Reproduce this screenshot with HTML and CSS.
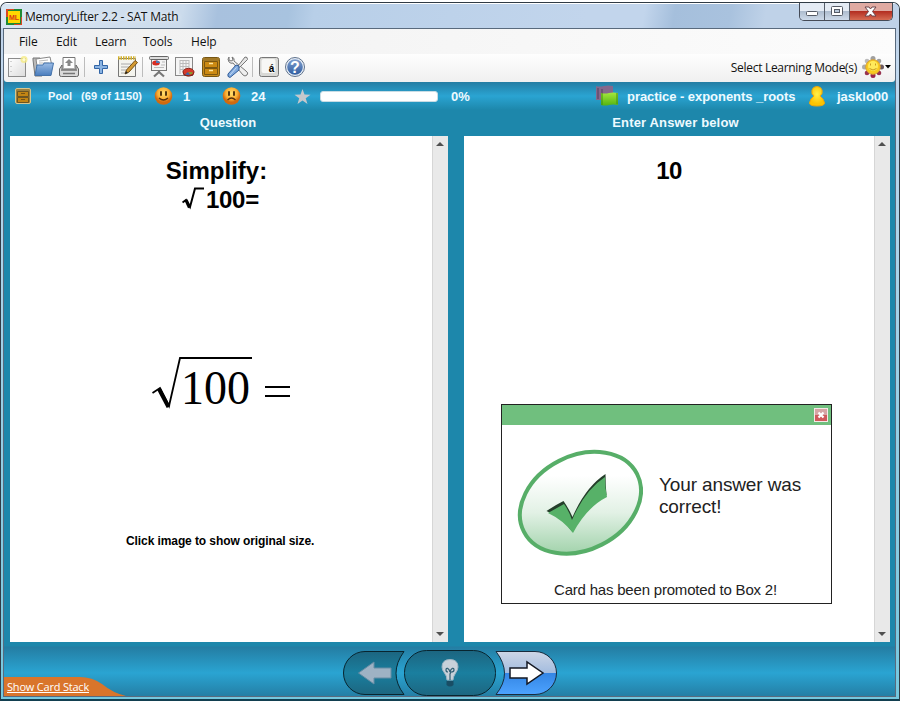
FILE: index.html
```html
<!DOCTYPE html>
<html lang="en">
<head>
<meta charset="utf-8">
<title>MemoryLifter 2.2 - SAT Math</title>
<link rel="stylesheet" href="styles.css">
</head>
<body>
<svg class="defs" width="0" height="0" aria-hidden="true">
  <defs>
    <linearGradient id="paper" x2="1" y2="1"><stop stop-color="#fff"/><stop offset="1" stop-color="#dcdcdc"/></linearGradient>
    <linearGradient id="blue" x2="0" y2="1"><stop stop-color="#9cbde6"/><stop offset="1" stop-color="#4a7dbd"/></linearGradient>
    <linearGradient id="help" x2="0" y2="1"><stop stop-color="#7f9fce"/><stop offset="1" stop-color="#2f5ca0"/></linearGradient>
    <radialGradient id="face" cy=".35"><stop stop-color="#ffe070"/><stop offset=".65" stop-color="#fbb034"/><stop offset="1" stop-color="#d06a10"/></radialGradient>
    <radialGradient id="person" cy=".4"><stop stop-color="#fff04a"/><stop offset="1" stop-color="#fcc400"/></radialGradient>
    <linearGradient id="badge" gradientUnits="userSpaceOnUse" x1="63" y1="0" x2="63" y2="106" gradientTransform="rotate(27 63 54)"><stop offset=".25" stop-color="#fff"/><stop offset=".6" stop-color="#e2f1e5"/><stop offset="1" stop-color="#a0d2aa"/></linearGradient>
    <linearGradient id="dark" x2="0" y2="1"><stop stop-color="#1c6580"/><stop offset=".5" stop-color="#1a7f9f"/><stop offset="1" stop-color="#1d6680"/></linearGradient>
    <linearGradient id="next" x2="0" y2="1"><stop stop-color="#cdd6e6"/><stop offset=".5" stop-color="#a3bcdf"/><stop offset=".51" stop-color="#3486e4"/><stop offset="1" stop-color="#4da3ff"/></linearGradient>
    <linearGradient id="green" x2="0" y2="1"><stop stop-color="#a5e83c"/><stop offset="1" stop-color="#54b412"/></linearGradient>
  </defs>
</svg>
<main class="window">
  <header class="titlebar">
    <svg class="logo" width="16" height="16" viewBox="0 0 16 16"><rect width="16" height="16" fill="#1f8a35"/><path d="M0 0H8V1H2V8H0ZM15 8h1v8H8v-1h7Z" fill="#d94722"/><rect x="2" y="2" width="12" height="12" fill="#ffd800"/><text x="8" y="10.500" class="logo-text">ML</text></svg>
    <span class="caption">MemoryLifter 2.2 - SAT Math</span>
    <div class="controls">
      <span class="ctl"><svg width="25" height="17" viewBox="0 0 25 17"><rect x="6.500" y="8.500" width="11" height="4" rx="1" fill="#fff" stroke="#555b66"/></svg></span>
      <span class="ctl"><svg width="25" height="17" viewBox="0 0 25 17"><rect x="6.500" y="3.500" width="11" height="9" rx="1" fill="#fff" stroke="#555b66"/><rect x="9.500" y="6.500" width="5" height="3" fill="#b9c8da" stroke="#555b66"/></svg></span>
      <span class="ctl close"><svg width="42" height="17" viewBox="0 0 42 17"><path d="M15 4h4l1.500 2L22 4h4l-3.500 4.500L26 13h-4l-1.500-2-1.500 2h-4l3.500-4.500Z" fill="#fff" stroke="#6b454b"/></svg></span>
    </div>
  </header>
  <div class="client">
    <nav class="menu"><span>File</span><span>Edit</span><span>Learn</span><span>Tools</span><span>Help</span></nav>
    <div class="toolbar">
      <svg class="tool" viewBox="0 0 26 24"><rect x="4.500" y="3.500" width="17" height="18" fill="url(#paper)" stroke="#8c8c8c"/><path d="M7 6v14" stroke="#aaa" stroke-dasharray="1 4"/><circle cx="20" cy="4.500" r="3.500" fill="#f5eb83" opacity=".8"/><circle cx="20" cy="4.500" r="1.500" fill="#fffbd0"/></svg>
      <svg class="tool" viewBox="0 0 26 24"><path d="M3 5V3h7l2 3v15H5Z" fill="#bbb" stroke="#777"/><path d="M6 4l14-2 2 9H7Z" fill="#fff" stroke="#888"/><path d="M9 6l9-1M9 8h10" stroke="#bbb"/><path d="M7 10h6l1-2h9.500L21 20.500H5Z" fill="url(#blue)" stroke="#4472aa"/></svg>
      <svg class="tool" viewBox="0 0 26 24"><path d="M7 13V2.500h12V13" fill="#fff" stroke="#777"/><path d="M13 4l4 4h-2.500v3h-3V8H9Z" fill="#888"/><path d="M6 10 3.500 14v6q0 1.500 2 1.500h15q2 0 2-1.500v-6L20 10v4H6Z" fill="#dadada" stroke="#666"/><path d="M5 15h16M7 18.500h12" stroke="#777" stroke-width="1.500"/></svg>
      <i class="sep"></i>
      <svg class="tool" viewBox="0 0 26 24"><path d="M11.500 5.500h3v5h5v3h-5v5h-3v-5h-5v-3h5Z" fill="#8ab3e2" stroke="#3265a6"/></svg>
      <svg class="tool" viewBox="0 0 26 24"><path d="M4.500 3.500h17v18h-17Z" fill="#f4f4ee" stroke="#777"/><path d="M4 3h18" stroke="#d2b02a" stroke-width="3.500" stroke-dasharray="1.500 1"/><path d="M7 9h10M7 12h8M7 15h7M7 18h5" stroke="#aaa"/><path d="M11 19l1.500-4L21 5.500l2.500 2L15 17Z" fill="#d49a32" stroke="#765016"/><path d="M11 19l1-3 2 2Z" fill="#222"/></svg>
      <i class="sep"></i>
      <svg class="tool" viewBox="0 0 26 24"><path d="M13 14v4M13 17l-5 4.500M13 17l5 4.500" stroke="#777" stroke-width="2.200" fill="none"/><rect x="5.500" y="3" width="15" height="12.500" fill="#f4f4f4" stroke="#777"/><rect x="3.500" y="1.500" width="19" height="3" rx="1" fill="#ddd" stroke="#666"/><ellipse cx="10" cy="8" rx="3.800" ry="2.500" fill="#d72c23"/><path d="M10 8V5.500q4 0 4 2.500Z" fill="#4f7ab7"/><path d="M16 7h3M15 10h4M8 12.500h10" stroke="#bbb"/></svg>
      <svg class="tool" viewBox="0 0 26 24"><rect x="3.500" y="2.500" width="17" height="18" fill="#f5f5f5" stroke="#888"/><path d="M8 5.500h9M8 8.500h9M8 11.500h9M8 14.500h5M8 5v14M11 5v12M14 5v9M17 5v9" stroke="#bbb"/><path d="M11 17v1.500c0 4 11 4 11 0V17" fill="#7d2218"/><ellipse cx="16.500" cy="17" rx="5.500" ry="3.700" fill="#d63a2b" stroke="#872319"/><path d="M16 17l-3 2.500 5 .8Z" fill="#3a67a6"/><path d="M16 17l3 2.500 2-2Z" fill="#78ae34"/></svg>
      <svg class="tool" viewBox="0 0 26 24"><rect x="4.500" y="2.500" width="17" height="19" rx="2" fill="#c78b1c" stroke="#765613"/><path d="M5 3h16v3H5Z" fill="#a27927"/><path d="M6.500 6.500h13v6h-13ZM6.500 13.500h13v6h-13Z" fill="#cb8912" stroke="#7c5710"/><path d="M11 8.500h4M11 15.500h4" fill="none" stroke="#ffe7a0" stroke-width="1.500"/></svg>
      <svg class="tool" viewBox="0 0 26 24"><path d="M5 2q-2 2 0 5 2 2 4 1l10 12q2 2 4 0t-1-4L10 6q1-3-2-4L9 5 7 6 5 5Z" fill="#eee" stroke="#777"/><path d="M23 2.500 21 2 14 11l1.500 1.500 8-8Z" fill="#e5e5e5" stroke="#777"/><path d="M15 11l-3-1-8 9q-1 3 2 3.500L15 15Z" fill="#80a9dd" stroke="#315c98"/><path d="M12.500 12.500 6 20" stroke="#c4dbf5"/></svg>
      <i class="sep"></i>
      <svg class="tool" viewBox="0 0 26 24"><rect x="3.500" y="2.500" width="19" height="19" rx="2" fill="#d8d8d5" stroke="#777"/><rect x="5.500" y="4" width="14" height="14" rx="2" fill="#f7f7f5"/><text class="accent" x="15.500" y="17">á</text></svg>
      <svg class="tool" viewBox="0 0 26 24"><circle cx="13" cy="12" r="9.500" fill="#e6edf6" stroke="#60738d"/><circle cx="13" cy="12" r="7.800" fill="url(#help)"/><text class="help" x="13" y="17.500">?</text></svg>
      <span class="mode">Select Learning Mode(s)</span>
      <svg class="gear" width="22" height="22" viewBox="0 0 22 22"><g fill="#a0a0a0"><circle cx="11" cy="2.500" r="2.500"/><circle cx="5" cy="5" r="2.300" fill="#bbb"/><circle cx="17" cy="5" r="2.300"/><circle cx="2.500" cy="11" r="2.500" fill="#aaa"/><circle cx="19.500" cy="11" r="2.500" fill="#6c5a60"/><circle cx="5" cy="17" r="2.300" fill="#98334f"/><circle cx="17" cy="17" r="2.300" fill="#98334f"/><circle cx="11" cy="19.500" r="2.500" fill="#98224b"/></g><circle cx="11" cy="11" r="7.300" fill="#f8c91e" stroke="#d9a035"/><circle cx="11" cy="10" r="5" fill="#ffe95a"/><path d="M8.500 7.500v2M13.500 7.500v2M7.500 12.500q3.500 3 7 0" stroke="#c99a20" fill="none"/></svg>
      <svg class="drop" width="6" height="4" viewBox="0 0 6 4"><path d="M0 0h6L3 3.500Z"/></svg>
    </div>
    <div class="status">
      <svg width="18" height="18" viewBox="0 0 18 18"><rect x="1.500" y="1.500" width="15" height="15" rx="1.500" fill="#9c8140" stroke="#d7c68e"/><path d="M3.500 4.500h11v5h-11ZM3.500 10.500h11v5h-11Z" fill="#c38513" stroke="#6e5521"/><path d="M7 6.500h4M7 12.500h4" stroke="#785413"/></svg>
      <span class="pool">Pool</span><span class="count">(69 of 1150)</span>
      <svg width="20" height="20" viewBox="0 0 20 20"><circle cx="9.500" cy="10" r="8.800" fill="url(#face)"/><path d="M7 6v3M12 6v3" stroke="#432708" stroke-width="1.800" stroke-linecap="round"/><path d="M5 12q4.500 4 9 0" fill="none" stroke="#59300b" stroke-width="1.200"/></svg>
      <span>1</span>
      <svg width="20" height="20" viewBox="0 0 20 20"><circle cx="9.500" cy="10" r="8.800" fill="url(#face)"/><path d="M7 6v3M12 6v3" stroke="#432708" stroke-width="1.800" stroke-linecap="round"/><path d="M5.500 14q4-4 8 0" fill="none" stroke="#59300b" stroke-width="1.200"/></svg>
      <span>24</span>
      <svg width="17" height="17" viewBox="0 0 17 17"><path d="M8.500 1l2 5.500 6 .2-4.800 3.600 1.800 5.700-5-3.400L3.500 16l1.700-5.700L.500 6.700l6-.2Z" fill="#c5c8cc"/></svg>
      <div class="progress"></div><span>0%</span>
      <svg width="22" height="22" viewBox="0 0 22 22"><path d="M0 1q3 1 8 0 4-1 9 0v14H0Z" fill="#85688c"/><path d="M2 3v11M6 4v10" stroke="#634d6e" stroke-width="1.500"/><path d="M5 8q4 1 8 0 4-1 9 0v12q-5-1-9 0-4 1-8 0Z" fill="url(#green)"/><path d="M6 8v12M21 8v11" stroke="#408e12"/></svg>
      <span class="chapter">practice - exponents _roots</span>
      <svg width="16" height="21" viewBox="0 0 16 21"><path d="M5 10Q2 8 3 4q1-3.500 5-3.500T13 4q1 4-2 6 4 3 4.500 7 0 3-7.500 3T.500 17Q1 13 5 10Z" fill="url(#person)" stroke="#eda70a"/></svg>
      <span class="user">jasklo00</span>
    </div>
    <div class="workspace">
      <section class="column">
        <h2 class="heading question">Question</h2>
        <div class="panel">
          <article class="card card-question">
            <div class="prompt">Simplify:</div>
            <div class="prompt root"><svg width="22" height="24" viewBox="0 0 22 24"><path d="M.500 16.500 4 14l4 7L13 2.500h9" fill="none" stroke="#000" stroke-width="2"/><path d="M4 14l3.500 7.500" stroke="#000" stroke-width="3.200"/></svg><span>100=</span></div>
            <svg class="formula" width="140" height="56" viewBox="0 0 140 56"><path d="M.500 37 8 32l9 18L28 2h72" fill="none" stroke="#000" stroke-width="1.800"/><path d="M7 33l9.500 18" stroke="#000" stroke-width="4"/><text x="29" y="48" textLength="69" lengthAdjust="spacingAndGlyphs">100</text><path d="M113 31h25M113 40h25" stroke="#000" stroke-width="2"/></svg>
            <p class="hint">Click image to show original size.</p>
          </article>
          <div class="scroll"><i class="up"></i><i class="down"></i></div>
        </div>
      </section>
      <section class="column">
        <h2 class="heading answer">Enter Answer below</h2>
        <div class="panel">
          <article class="card card-answer">
            <div class="prompt">10</div>
            <div class="dialog">
              <div class="dialog-bar"><svg width="14" height="14" viewBox="0 0 14 14"><rect x=".5" y=".5" width="13" height="13" fill="#cf5a5c" stroke="#f5e8e6"/><path d="M1 1h12v6H1Z" fill="#d6a5a5"/><path d="M4.500 4.500l5 5M9.500 4.500l-5 5" stroke="#fff" stroke-width="2.200"/></svg></div>
              <div class="dialog-body">
                <svg width="126" height="108" viewBox="0 0 126 108"><ellipse cx="63.500" cy="54" rx="63.500" ry="47" transform="rotate(-27 63 54)" fill="url(#badge)" stroke="#57ae68" stroke-width="4"/><path d="M30 63q9-6 17-10 5 7 9 16 13-30 33-43 0 11 1 21-20 10-34 37-10-14-26-21Z" fill="#243e2a" transform="translate(-.5 -1)"/><path d="M31 64q9-5 16-9 5 7 8 16 13-30 33-43 0 11 2 20-20 10-34 36-10-13-25-20Z" fill="#57b168"/></svg>
                <div class="message">Your answer was<br>correct!</div>
              </div>
              <p class="promotion">Card has been promoted to Box 2!</p>
            </div>
          </article>
          <div class="scroll"><i class="up"></i><i class="down"></i></div>
        </div>
      </section>
    </div>
    <footer class="bottom">
      <div class="stack"><svg width="122" height="20" viewBox="0 0 122 20"><path d="M0 1h76q12 0 22 7 11 9 24 12H0Z" fill="#d9752b"/></svg><a>Show Card Stack</a></div>
      <svg class="buttons" width="216" height="46" viewBox="0 0 216 46">
        <path d="M61 1.500H22a21.500 21.500 0 0 0 0 43h39q-16-21 0-43Z" fill="url(#dark)" stroke="#08252f"/>
        <path d="M15.500 23 31 12v6h17v10H31v6Z" fill="#9eb2c4" stroke="#668da5"/>
        <rect x="61.500" y=".5" width="91" height="45" rx="22" fill="url(#dark)" stroke="#08252f"/>
        <path d="M104 30q0-4-2.500-7-2.500-3-2.500-6 0-7.500 8-7.500t8 7.500q0 3-3 7-2 3-2 6Z" fill="#c8d1da" stroke="#9eb5c3"/><path d="M105 22q-2 0-2-2c0-3 3-2 4 2 1-4 4-5 4-2q0 2-3 2l-1 2v6" fill="none" stroke="#315f74" stroke-width="1.200"/><path d="M103.500 31h7v4q-3.500 3-7 0Z" fill="#194d64"/>
        <path d="M153 1.500h39a21.500 21.500 0 0 1 0 43h-39q17-21 0-43Z" fill="url(#next)" stroke="#182b3d"/>
        <path d="M167 18h17v-6l16 11-16 11v-6h-17Z" fill="#fff" stroke="#151923" stroke-width="1.500"/>
      </svg>
    </footer>
  </div>
</main>
</body>
</html>
```
FILE: styles.css
```css
* { box-sizing: border-box; }
body { margin: 0; padding-top: 2px; width: 900px; height: 701px; background: #fff; overflow: hidden; font: 13px "Liberation Sans", sans-serif; }
.defs { position: absolute; }
svg { display: block; flex: none; }
.window { height: 699px; border: 1px solid #303b45; border-bottom: 2px solid #123f50; border-radius: 7px 7px 0 0; padding: 0 3px 2px 2px; background: linear-gradient(#bfd2e8 0 30px, #c3d9ef 60px, #74c8df 100%); display: flex; flex-direction: column; overflow: hidden; }
.titlebar { height: 25px; flex: none; display: flex; align-items: center; margin: 0 -3px 0 -2px; padding-left: 5px; border-top: 1px solid #fff; background: linear-gradient(100deg, #d9e5f2 0, #cbdbec 180px, #a8c1de 215px, #a8c3df 285px, #b8cfe8 310px, #c2d5ec 580px, #c2d5ec 635px, #a5bfdc 665px, #a9c2de 720px, #bfd2e8 755px, #bfd2e8); }
.logo { margin-top: 1px; }
.logo-text { font: bold 7px "Liberation Sans"; text-anchor: middle; fill: #d9361a; }
.caption { margin: 1px 0 0 3px; font: 12px "Open Sans", sans-serif; color: #111; letter-spacing: -.21px; text-shadow: 0 0 5px #fff; }
.controls { display: flex; align-self: flex-start; margin: -1px 6px 0 auto; border: 1px solid #454b57; border-top: 0; border-radius: 0 0 5px 5px; overflow: hidden; height: 18px; }
.ctl { background: linear-gradient(#e4ebf4 0 45%, #aebdcf 50%, #cedbea); border-right: 1px solid #555d69; width: 25px; }
.close { background: linear-gradient(#dfaaa2 0 45%, #b42f22 50%, #d66c53); width: 42px; border: 0; }
.client { flex: 1; display: flex; flex-direction: column; border: 1px solid #596a7d; background: #1d87ab; min-height: 0; }
.menu { height: 25px; flex: none; display: grid; grid-template-columns: 37px 39px 48px 48px 60px; padding: 4px 0 0 15px; background: linear-gradient(90deg, #f0f0f0, #fcfcfc); font: 12px "Open Sans", sans-serif; color: #111; letter-spacing: -.1px; }
.toolbar { height: 28px; flex: none; display: flex; align-items: center; padding-bottom: 2px; background: linear-gradient(#fefefe, #f0f0f0); border-radius: 0 0 3px 3px; }
.tool { width: 26px; height: 24px; }
.sep { width: 6px; height: 20px; border-left: 1px solid #bcbcbc; transform: translateX(2px); }
.accent { font: bold 10px "Liberation Sans"; text-anchor: middle; }
.help { font: bold 16px "Liberation Sans"; text-anchor: middle; fill: #fff; }
.mode { margin-left: auto; font: 12px "Open Sans", sans-serif; letter-spacing: -.3px; color: #111; }
.gear { margin-left: 5px; }
.drop { margin: 0 4px 0 1px; }
.status { height: 28px; flex: none; display: grid; grid-template-columns: 34px 33px 73px 29px 39px 29px 43px 26px 131px 145px 31px 182px 28px 1fr; padding-left: 10px; align-items: center; background: linear-gradient(#247da3, #2aa4d2 50%, #1d87ab); color: #eefaff; font-weight: bold; white-space: nowrap; }
.pool, .count { font-size: 11px; letter-spacing: .1px; }
.chapter { letter-spacing: -.05px; }
.progress { width: 118px; height: 11px; background: #fff; border: 1px solid #c8dce4; border-radius: 3px; }
.workspace { height: 532px; flex: none; display: grid; grid-template-columns: 438px 426px; gap: 16px; padding: 0 6px; }
.heading { margin: 0; height: 26px; line-height: 25px; font-size: 13px; color: #eefaff; text-align: center; }
.question { padding-right: 2px; }
.answer { padding-right: 3px; letter-spacing: .15px; }
.panel { height: 506px; background: #fff; display: flex; }
.card { flex: 1; display: flex; flex-direction: column; }
.scroll { width: 16px; background: #e9e9e9; border-left: 1px solid #d6d6d6; display: flex; flex-direction: column; justify-content: space-between; align-items: center; padding: 6px 2px 6px 0; }
.up, .down { border: 4px solid transparent; border-top-width: 0; border-bottom: 4px solid #505050; }
.down { border-top: 4px solid #505050; border-bottom-width: 0; }
.prompt { font: bold 24px/29px "Liberation Sans", sans-serif; text-align: center; }
.card-question { padding-top: 20px; }
.card-question .prompt { padding-right: 9px; }
.card-question .root { display: flex; padding: 0 0 0 172px; }
.root svg { margin-top: 1px; }
.root span { margin-left: 2px; letter-spacing: -.3px; }
.formula { margin: 142px 0 0 142px; overflow: visible; }
.formula text { font: 48px "Liberation Serif", serif; }
.hint { margin: 121px 0 0 116px; font: bold 12px/16px "Liberation Sans", sans-serif; letter-spacing: -.09px; }
.card-answer { padding-top: 20px; }
.card-answer .prompt { letter-spacing: -.5px; }
.dialog { width: 331px; height: 200px; margin: 219px 0 0 37px; border: 1px solid #222; background: #fff; display: flex; flex-direction: column; }
.dialog-bar { height: 20px; background: #70bf7e; display: flex; justify-content: flex-end; align-items: center; padding-right: 3px; }
.dialog-body { display: flex; padding: 24px 0 0 15px; }
.message { margin: 25px 0 0 16px; font: 19px/22px "Liberation Sans", sans-serif; color: #222; white-space: nowrap; letter-spacing: -.13px; }
.promotion { margin: 22px 0 0 52px; font: 15px/22px "Liberation Sans", sans-serif; color: #222; white-space: nowrap; letter-spacing: -.2px; }
.bottom { flex: 1; display: grid; grid-template-columns: 340px 216px; align-items: end; background: linear-gradient(#1d87ab 0 4px, #247da3 5px, #2aa4d2 31px, #247da3 55px); }
.stack { display: grid; }
.stack > * { grid-area: 1 / 1; }
.stack a { padding: 2px 0 0 3px; font: 11px/17px "Open Sans", sans-serif; color: #fff; text-decoration: underline; letter-spacing: -.2px; }
.buttons { align-self: start; margin-top: 8px; margin-left: -1px; }
```
